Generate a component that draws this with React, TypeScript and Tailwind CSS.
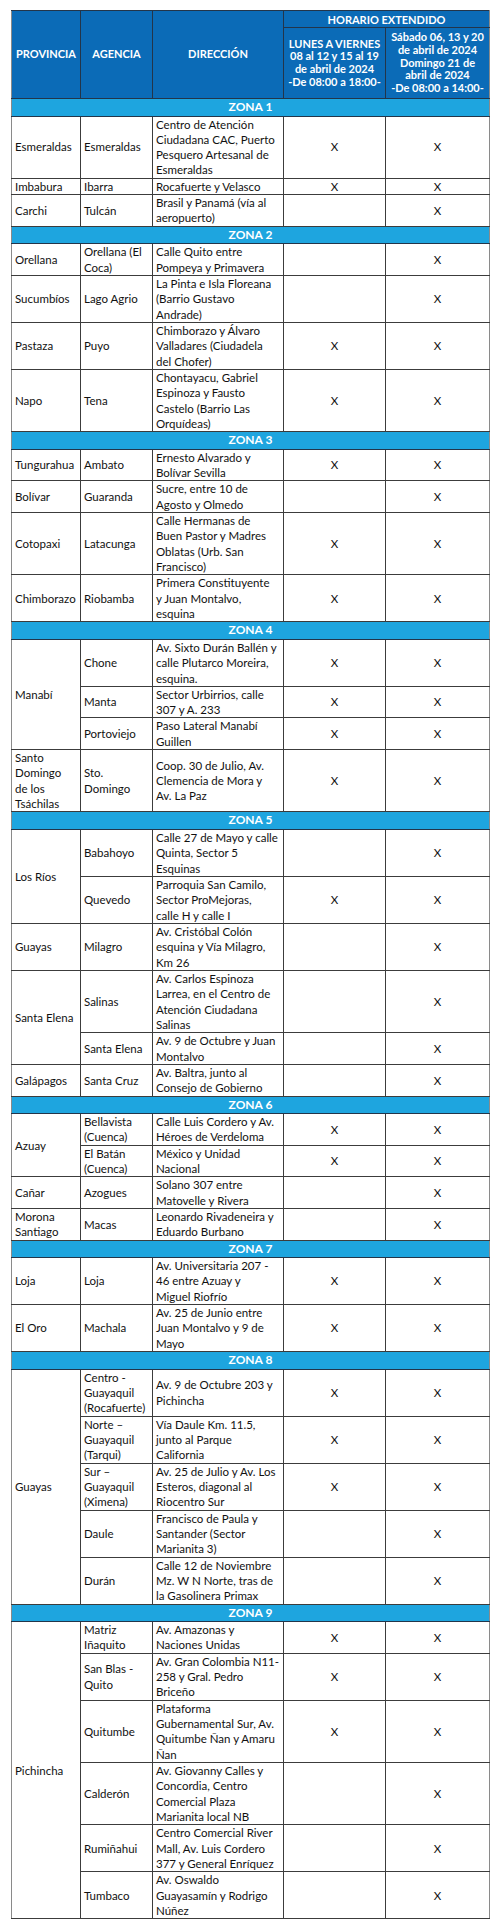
import React from "react";

type Row = {
  prov?: string | null; // null = covered by a rowspan above
  span?: number;
  agency: string;
  addr: string;
  a?: boolean;
  b?: boolean;
};

type Zone = { name: string; rows: Row[] };

const ZONES: Zone[] = [
  {
    name: "ZONA 1",
    rows: [
      { prov: "Esmeraldas", agency: "Esmeraldas", addr: "Centro de Atención\nCiudadana CAC, Puerto\nPesquero Artesanal de\nEsmeraldas", a: true, b: true },
      { prov: "Imbabura", agency: "Ibarra", addr: "Rocafuerte y Velasco", a: true, b: true },
      { prov: "Carchi", agency: "Tulcán", addr: "Brasil y Panamá (vía al\naeropuerto)", b: true },
    ],
  },
  {
    name: "ZONA 2",
    rows: [
      { prov: "Orellana", agency: "Orellana (El\nCoca)", addr: "Calle Quito entre\nPompeya y Primavera", b: true },
      { prov: "Sucumbíos", agency: "Lago Agrio", addr: "La Pinta e Isla Floreana\n(Barrio Gustavo\nAndrade)", b: true },
      { prov: "Pastaza", agency: "Puyo", addr: "Chimborazo y Álvaro\nValladares (Ciudadela\ndel Chofer)", a: true, b: true },
      { prov: "Napo", agency: "Tena", addr: "Chontayacu, Gabriel\nEspinoza y Fausto\nCastelo (Barrio Las\nOrquídeas)", a: true, b: true },
    ],
  },
  {
    name: "ZONA 3",
    rows: [
      { prov: "Tungurahua", agency: "Ambato", addr: "Ernesto Alvarado y\nBolívar Sevilla", a: true, b: true },
      { prov: "Bolívar", agency: "Guaranda", addr: "Sucre, entre 10 de\nAgosto y Olmedo", b: true },
      { prov: "Cotopaxi", agency: "Latacunga", addr: "Calle Hermanas de\nBuen Pastor y Madres\nOblatas (Urb. San\nFrancisco)", a: true, b: true },
      { prov: "Chimborazo", agency: "Riobamba", addr: "Primera Constituyente\ny Juan Montalvo,\nesquina", a: true, b: true },
    ],
  },
  {
    name: "ZONA 4",
    rows: [
      { prov: "Manabí", span: 3, agency: "Chone", addr: "Av. Sixto Durán Ballén y\ncalle Plutarco Moreira,\nesquina.", a: true, b: true },
      { prov: null, agency: "Manta", addr: "Sector Urbirrios, calle\n307 y A. 233", a: true, b: true },
      { prov: null, agency: "Portoviejo", addr: "Paso Lateral Manabí\nGuillen", a: true, b: true },
      { prov: "Santo\nDomingo\nde los\nTsáchilas", agency: "Sto.\nDomingo", addr: "Coop. 30 de Julio, Av.\nClemencia de Mora y\nAv. La Paz", a: true, b: true },
    ],
  },
  {
    name: "ZONA 5",
    rows: [
      { prov: "Los Ríos", span: 2, agency: "Babahoyo", addr: "Calle 27 de Mayo y calle\nQuinta, Sector 5\nEsquinas", b: true },
      { prov: null, agency: "Quevedo", addr: "Parroquia San Camilo,\nSector ProMejoras,\ncalle H y calle I", a: true, b: true },
      { prov: "Guayas", agency: "Milagro", addr: "Av. Cristóbal Colón\nesquina y Vía Milagro,\nKm 26", b: true },
      { prov: "Santa Elena", span: 2, agency: "Salinas", addr: "Av. Carlos Espinoza\nLarrea, en el Centro de\nAtención Ciudadana\nSalinas", b: true },
      { prov: null, agency: "Santa Elena", addr: "Av. 9 de Octubre y Juan\nMontalvo", b: true },
      { prov: "Galápagos", agency: "Santa Cruz", addr: "Av. Baltra, junto al\nConsejo de Gobierno", b: true },
    ],
  },
  {
    name: "ZONA 6",
    rows: [
      { prov: "Azuay", span: 2, agency: "Bellavista\n(Cuenca)", addr: "Calle Luis Cordero y Av.\nHéroes de Verdeloma", a: true, b: true },
      { prov: null, agency: "El Batán\n(Cuenca)", addr: "México y Unidad\nNacional", a: true, b: true },
      { prov: "Cañar", agency: "Azogues", addr: "Solano 307 entre\nMatovelle y Rivera", b: true },
      { prov: "Morona\nSantiago", agency: "Macas", addr: "Leonardo Rivadeneira y\nEduardo Burbano", b: true },
    ],
  },
  {
    name: "ZONA 7",
    rows: [
      { prov: "Loja", agency: "Loja", addr: "Av. Universitaria 207 -\n46 entre Azuay y\nMiguel Riofrío", a: true, b: true },
      { prov: "El Oro", agency: "Machala", addr: "Av. 25 de Junio entre\nJuan Montalvo y 9 de\nMayo", a: true, b: true },
    ],
  },
  {
    name: "ZONA 8",
    rows: [
      { prov: "Guayas", span: 5, agency: "Centro -\nGuayaquil\n(Rocafuerte)", addr: "Av. 9 de Octubre 203 y\nPichincha", a: true, b: true },
      { prov: null, agency: "Norte –\nGuayaquil\n(Tarqui)", addr: "Vía Daule Km. 11.5,\njunto al Parque\nCalifornia", a: true, b: true },
      { prov: null, agency: "Sur –\nGuayaquil\n(Ximena)", addr: "Av. 25 de Julio y Av. Los\nEsteros, diagonal al\nRiocentro Sur", a: true, b: true },
      { prov: null, agency: "Daule", addr: "Francisco de Paula y\nSantander (Sector\nMarianita 3)", b: true },
      { prov: null, agency: "Durán", addr: "Calle 12 de Noviembre\nMz. W N Norte, tras de\nla Gasolinera Primax", b: true },
    ],
  },
  {
    name: "ZONA 9",
    rows: [
      { prov: "Pichincha", span: 6, agency: "Matriz\nIñaquito", addr: "Av. Amazonas y\nNaciones Unidas", a: true, b: true },
      { prov: null, agency: "San Blas -\nQuito", addr: "Av. Gran Colombia N11-\n258 y Gral. Pedro\nBriceño", a: true, b: true },
      { prov: null, agency: "Quitumbe", addr: "Plataforma\nGubernamental Sur, Av.\nQuitumbe Ñan y Amaru\nÑan", a: true, b: true },
      { prov: null, agency: "Calderón", addr: "Av. Giovanny Calles y\nConcordia, Centro\nComercial Plaza\nMarianita local NB", b: true },
      { prov: null, agency: "Rumiñahui", addr: "Centro Comercial River\nMall, Av. Luis Cordero\n377 y General Enríquez", b: true },
      { prov: null, agency: "Tumbaco", addr: "Av. Oswaldo\nGuayasamín y Rodrigo\nNúñez", b: true },
    ],
  },
];

const cell = "border border-[#3c3c3c] px-[3px] py-0 align-middle whitespace-pre leading-[15.33px]";
const head = "border border-[#23354a] bg-[#0b6bb7] text-white font-bold align-middle text-center";

export default function App() {
  return (
    <div className="min-h-[1923px] w-[500px] bg-white pl-[11px] pt-[10px] font-['Lato',sans-serif] text-[11.5px] text-[#111]">
      <table className="w-[478px] table-fixed border-collapse">
        <colgroup>
          <col className="w-[69px]" />
          <col className="w-[72px]" />
          <col className="w-[131px]" />
          <col className="w-[102px]" />
          <col className="w-[104px]" />
        </colgroup>
        <thead>
          <tr>
            <th rowSpan={2} className={`${head} border-l-[#8a8a8a] text-[11px]`}>PROVINCIA</th>
            <th rowSpan={2} className={`${head} text-[11px]`}>AGENCIA</th>
            <th rowSpan={2} className={`${head} text-[11px]`}>DIRECCIÓN</th>
            <th colSpan={2} className={`${head} h-[17px] border-r-[#8a8a8a] text-[11px] leading-[15px]`}>
              HORARIO EXTENDIDO
            </th>
          </tr>
          <tr>
            <th className={`${head} h-[71px] whitespace-pre text-[11px] leading-[12.7px]`}>
              {"LUNES A VIERNES\n08 al 12 y 15 al 19\nde abril de 2024\n-De 08:00 a 18:00-"}
            </th>
            <th className={`${head} h-[71px] whitespace-pre border-r-[#8a8a8a] text-[11px] leading-[12.7px]`}>
              {"Sábado 06, 13 y 20\nde abril de 2024\nDomingo 21 de\nabril de 2024\n-De 08:00 a 14:00-"}
            </th>
          </tr>
        </thead>
        <tbody>
          {ZONES.map((zone) => (
            <React.Fragment key={zone.name}>
              <tr>
                <td
                  colSpan={5}
                  className="border border-x-[#8a8a8a] border-y-[#23354a] bg-[#1ea5df] py-0 text-center text-[12px] font-bold leading-[16.5px] text-white"
                >
                  {zone.name}
                </td>
              </tr>
              {zone.rows.map((row, i) => (
                <tr key={zone.name + i}>
                  {row.prov !== null && (
                    <td rowSpan={row.span ?? 1} className={`${cell} border-l-[#8a8a8a]`}>
                      {row.prov}
                    </td>
                  )}
                  <td className={cell}>{row.agency}</td>
                  <td className={cell}>{row.addr}</td>
                  <td className={`${cell} text-center`}>{row.a ? "X" : ""}</td>
                  <td className={`${cell} border-r-[#8a8a8a] text-center`}>{row.b ? "X" : ""}</td>
                </tr>
              ))}
            </React.Fragment>
          ))}
        </tbody>
      </table>
    </div>
  );
}
